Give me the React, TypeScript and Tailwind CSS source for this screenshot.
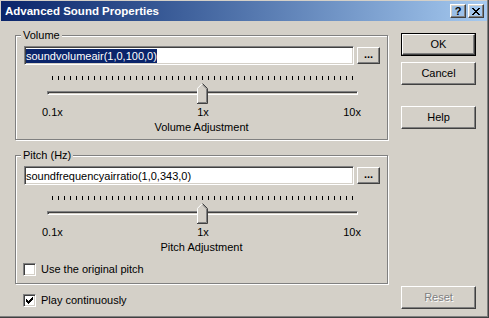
import React from "react";

const raised =
  "border border-t-white border-l-white border-b-[#404040] border-r-[#404040] shadow-[inset_-1px_-1px_0_#808080,inset_1px_1px_0_#d4d0c8]";
const sunken =
  "border border-t-[#808080] border-l-[#808080] border-b-white border-r-white shadow-[inset_1px_1px_0_#404040,inset_-1px_-1px_0_#d4d0c8]";

function Thumb() {
  return (
    <svg width="11" height="21" viewBox="0 0 11 21" className="absolute top-[7px] left-[150px]">
      <polygon points="0,5 5,0 10,5 10,20 0,20" fill="#d4d0c8" />
      <polyline points="0.5,20 0.5,5.3 5.3,0.5" stroke="#ffffff" fill="none" />
      <polyline points="5.5,0.5 10.5,5.5 10.5,20.5 0,20.5" stroke="#404040" fill="none" />
      <polyline points="5.6,1.9 9.5,5.9 9.5,19.5 1,19.5" stroke="#808080" fill="none" />
    </svg>
  );
}

function Slider() {
  const ticks = Array.from({ length: 51 });
  return (
    <div className="relative ml-[23px] mt-[11px] w-[311px] h-[28px]">
      <div className="absolute top-0 left-[5px] right-[5px] h-[4px] flex justify-between">
        {ticks.map((_, i) => (
          <div key={i} className="w-px h-[4px] bg-black" />
        ))}
      </div>
      <div className={`absolute top-[15px] left-0 right-0 h-[4px] ${sunken}`} />
      <Thumb />
    </div>
  );
}

function Check({ checked }: { checked?: boolean }) {
  return (
    <div className={`w-[13px] h-[13px] shrink-0 bg-white flex items-center justify-center ${sunken}`}>
      {checked && (
        <svg width="7" height="7" viewBox="0 0 7 7">
          <path
            d="M6 0h1v1h-1z M5 1h2v1h-2z M0 2h1v1h-1z M4 2h3v1h-3z M0 3h2v1h-2z M3 3h3v1h-3z M0 4h5v1h-5z M1 5h3v1h-3z M2 6h1v1h-1z"
            fill="#000"
          />
        </svg>
      )}
    </div>
  );
}

function SliderGroup({
  title,
  value,
  selected,
  caption,
  height,
  children,
}: {
  title: string;
  value: string;
  selected?: boolean;
  caption: string;
  height: string;
  children?: React.ReactNode;
}) {
  return (
    <div
      className={`relative border border-[#808080] shadow-[1px_1px_0_#ffffff,inset_1px_1px_0_#ffffff] pt-[10px] pl-[8px] ${height}`}
    >
      <span className="absolute -top-[7px] left-[5px] px-[2px] bg-[#d4d0c8] leading-[13px]">{title}</span>
      <div className="flex items-center">
        <div className={`w-[330px] h-[19px] bg-white flex items-center pl-[1px] ${sunken}`}>
          <span className={`leading-[14px] ${selected ? "bg-[#0a246a] text-white" : ""}`}>{value}</span>
        </div>
        <div className={`ml-[3px] w-[23px] h-[17px] flex items-center justify-center font-bold leading-none pb-[3px] ${raised}`}>
          ...
        </div>
      </div>
      <Slider />
      <div className="ml-[18px] mt-[2px] w-[319px] flex justify-between">
        <span>0.1x</span>
        <span>1x</span>
        <span>10x</span>
      </div>
      <div className="ml-[18px] mt-[2px] w-[319px] text-center">{caption}</div>
      {children}
    </div>
  );
}

export default function App() {
  return (
    <div className="w-[489px] h-[318px] bg-[#d4d0c8] border-r border-b border-r-[#404040] border-b-[#404040] shadow-[inset_-1px_-1px_0_#808080] pt-px pl-px pr-px flex flex-col overflow-hidden font-['Liberation_Sans',Arial,sans-serif] text-[11px] leading-[13px] text-black select-none">
      <div className="h-[20px] shrink-0 flex items-center bg-linear-to-r from-[#0a246a] to-[#a6caf0] pl-[4px] pr-[3px]">
        <span className="text-white font-bold text-[11.5px]">Advanced Sound Properties</span>
        <div className="ml-auto flex">
          <div className={`w-[16px] h-[14px] flex items-center justify-center font-bold text-[11px] leading-none ${raised}`}>
            ?
          </div>
          <div className={`ml-[2px] w-[16px] h-[14px] flex items-center justify-center ${raised}`}>
            <svg width="8" height="7" viewBox="0 0 8 7">
              <path
                d="M0 0h2v1h-2z M6 0h2v1h-2z M1 1h2v1h-2z M5 1h2v1h-2z M2 2h4v1h-4z M3 3h2v1h-2z M2 4h4v1h-4z M1 5h2v1h-2z M5 5h2v1h-2z M0 6h2v1h-2z M6 6h2v1h-2z"
                fill="#000"
              />
            </svg>
          </div>
        </div>
      </div>
      <div className="flex pl-[14px]">
        <div className="w-[373px] flex flex-col pt-[14px]">
          <SliderGroup
            title="Volume"
            value="soundvolumeair(1,0,100,0)"
            selected
            caption="Volume Adjustment"
            height="h-[105px]"
          />
          <div className="mt-[15px]">
            <SliderGroup
              title="Pitch (Hz)"
              value="soundfrequencyairratio(1,0,343,0)"
              caption="Pitch Adjustment"
              height="h-[129px]"
            >
              <div className="mt-[9px] -ml-px flex items-center gap-[5px]">
                <Check />
                <span>Use the original pitch</span>
              </div>
            </SliderGroup>
          </div>
          <div className="mt-[10px] ml-[8px] flex items-center gap-[5px]">
            <Check checked />
            <span>Play continuously</span>
          </div>
        </div>
        <div className="ml-[13px] w-[75px] flex flex-col pt-[12px]">
          <div className="h-[23px] border border-black">
            <div className={`h-full flex items-center justify-center ${raised}`}>OK</div>
          </div>
          <div className={`mt-[6px] h-[23px] flex items-center justify-center ${raised}`}>Cancel</div>
          <div className={`mt-[21px] h-[23px] flex items-center justify-center ${raised}`}>Help</div>
          <div
            className={`mt-[157px] h-[23px] flex items-center justify-center text-[#808080] [text-shadow:1px_1px_0_#ffffff] ${raised}`}
          >
            Reset
          </div>
        </div>
      </div>
    </div>
  );
}
